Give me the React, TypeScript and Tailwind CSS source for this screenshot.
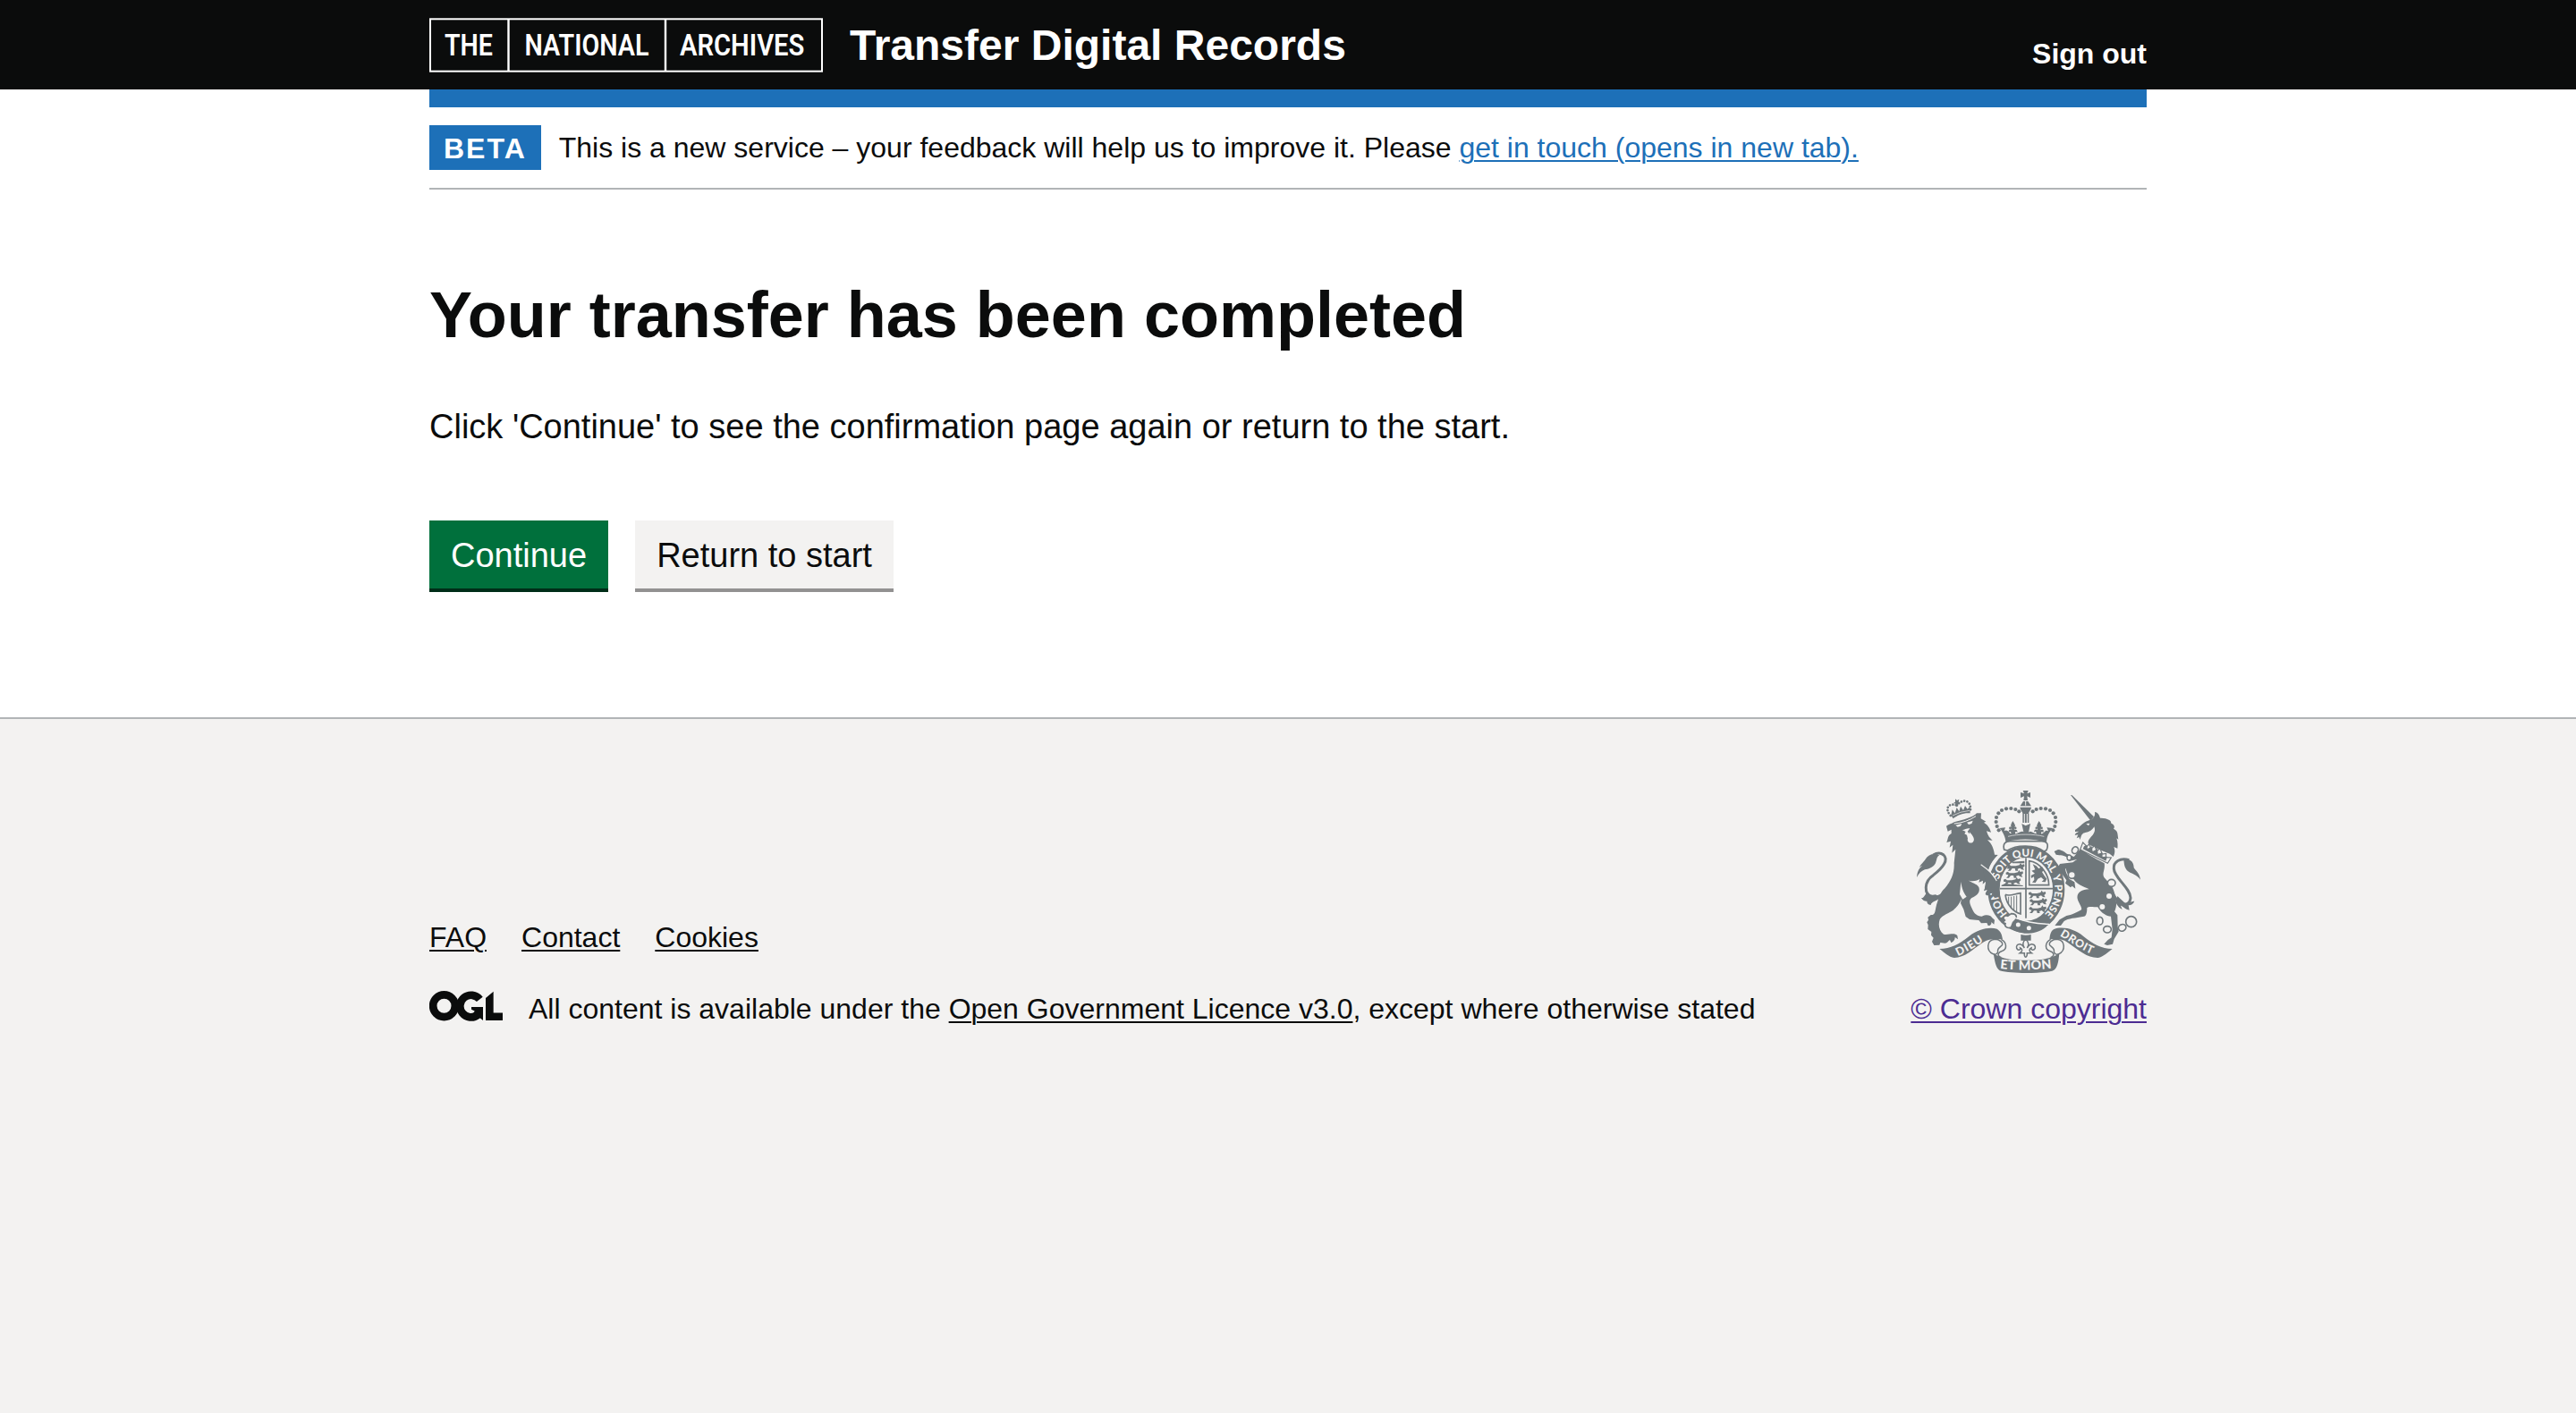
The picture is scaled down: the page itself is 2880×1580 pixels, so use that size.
import React from "react";

const GREY = "#6f777b";
const PAPER = "#f3f2f1";

function ArchivesLogo() {
  return (
    <svg className="block h-[61px] w-[440px]" viewBox="0 0 440 61" fill="none" aria-label="The National Archives">
      <rect x="1" y="1.3" width="438" height="58.4" stroke="#fff" strokeWidth="2" />
      <path d="M88.5 1v59M264 1v59" stroke="#fff" strokeWidth="2.4" />
      <g fill="#fff" fontFamily="Roboto, sans-serif" fontWeight="600" fontSize="34">
        <text transform="translate(17 42.3) scale(0.85 1)" textLength="63.5" lengthAdjust="spacingAndGlyphs">THE</text>
        <text transform="translate(106.5 42.3) scale(0.85 1)" textLength="163.5" lengthAdjust="spacingAndGlyphs">NATIONAL</text>
        <text transform="translate(280 42.3) scale(0.85 1)" textLength="164" lengthAdjust="spacingAndGlyphs">ARCHIVES</text>
      </g>
    </svg>
  );
}

function OglLogo() {
  return (
    <svg className="block h-[33.5px] w-[82px]" viewBox="0 0 246 100" aria-label="OGL">
      <g fill="none" stroke="#0b0c0c" strokeWidth="26">
        <circle cx="49.500" cy="50" r="37" />
        <path d="M169 28 A37 37 0 1 0 163 80" />
      </g>
      <path fill="#0b0c0c" d="M141 54H180V99L168 89C158 97 150 98 140 99L138 78C146 76 150 72 152 67L141 62ZM189 24 215 2V73H246V99H189Z" />
    </svg>
  );
}

function Fleur({ x, y, s }: { x: number; y: number; s: number }) {
  return (
    <g transform={`translate(${x} ${y}) scale(${s})`} fill={GREY}>
      <path d="M0-34C-14-14-12-4-3 8H3C12-4 14-14 0-34ZM-4 4C-10-8-22-6-20 4-18 12-10 10-9 5-8 10-6 12-4 14ZM4 4C10-8 22-6 20 4 18 12 10 10 9 5 8 10 6 12 4 14ZM-10 11H10V22H-10Z" />
    </g>
  );
}

const crownPearls: [number, number][] = [
  [344, 175], [338, 162], [335, 147], [336, 132], [343, 118], [354, 108], [369, 103], [385, 102], [400, 105], [412, 112],
];

function PasserLion({ x, y }: { x: number; y: number }) {
  return (
    <path
      transform={`translate(${x} ${y})`}
      d="M2 4 8 1 14 6H30L42 3 46-4 50 2 58 0 60 6 54 12 58 19 50 18 44 13 36 16 38 22H29L27 14H18L12 22H3L8 17 10 12 2 10Z"
    />
  );
}

function Crest() {
  return (
    <svg className="block h-[204px] w-[250px]" viewBox="69 42 750 612" fill={GREY} aria-label="Royal coat of arms">
      <defs>
        <path id="garter" d="M436 481A96 109 0 0 1 436 263A96 109 0 0 1 436 481" />
        <path id="scrollLeft" d="M207 597 C240 583 278 558 310 537" />
        <path id="scrollRight" d="M548 529 C585 548 620 580 674 597" />
        <path id="scrollMid" d="M348 639 Q434 649 540 636" />
      </defs>

      {/* Lion's crown */}
      <g fill="none" stroke={GREY} strokeWidth="8" strokeDasharray="0.100 10" strokeLinecap="round">
        <path d="M182 126C158 98 182 82 203 92M203 92C222 68 252 72 249 108" />
      </g>
      <path d="M198 70 204 75 211 71 209 80 216 84 207 86 208 94H201L199 86 192 84 198 80ZM184 125 188 106 197 118 203 99 211 112 216 95 225 108 231 93 239 104 247 96 248 118C226 116 206 124 191 136Z" />
      <path d="M189 126 Q215 112 246 109" stroke={PAPER} strokeWidth="2" fill="none" />

      {/* Lion's tail */}
      <path d="M172 372C156 390 142 404 122 399 90 390 94 346 124 326 156 302 177 274 159 258 148 249 134 252 124 258" fill="none" stroke={GREY} strokeWidth="9" />
      <path d="M69 333C71 310 78 302 88 294 83 296 79 298 77 300 86 284 92 282 98 272 108 256 126 251 145 259 134 264 137 276 131 287 121 302 108 304 96 307 84 312 76 320 69 333ZM101 386C90 402 89 403 84 402 90 412 98 414 103 413 103 420 106 424 116 426 118 414 132 416 150 400L132 391C118 394 108 390 101 386Z" />

      {/* Lion */}
      <path d="M168 161C181 153 187 153 194 148 225 140 257 132 270 118L285 118 284 136 301 146 294 149C308 158 314 168 318 182L303 178C307 194 315 203 323 209L306 208C322 221 327 239 330 257L343 258C326 272 315 290 312 304L322 318C334 336 345 366 346 390 338 402 330 404 320 394L323 382C313 388 309 400 299 390L306 374 294 379C300 364 300 357 302 346L290 356 291 344 277 350 280 339C265 348 247 347 239 341 253 352 271 354 277 366 283 382 271 395 253 402 242 410 247 424 254 437 261 455 270 463 287 464 302 457 316 459 321 468L330 476 328 491 319 483C321 491 314 496 308 495L304 486 285 487 277 477C264 477 254 474 246 474L233 465 226 440 216 420 219 405C212 421 202 437 187 446 168 457 151 463 146 475 140 493 144 512 159 524 175 528 195 516 205 529L207 541 197 534C197 545 190 550 184 552L180 543C174 547 172 553 164 554L148 552 145 560 127 561 120 549 125 536 117 527 118 516 106 507 107 493 103 484 108 476 106 467 116 459C130 461 130 448 133 434 140 408 148 382 163 370 183 346 196 320 194 285L199 239 187 251 190 224 179 233 183 212 169 216C175 204 171 194 185 186L185 173 173 179Z" />
      <g fill={PAPER}>
        <path d="M199 158 220 153 216 161 206 164ZM237 149 257 143 253 153 243 156ZM221 174C229 175 235 168 247 169L239 180C245 186 248 192 245 180 258 193 266 207 257 215 247 223 236 212 240 203L237 191 229 187 233 180Z" />
        <path d="M217 348C220 372 226 384 236 398L223 407 213 390Z" />
      </g>
      <path d="M194 153Q233 150 267 128" stroke={PAPER} strokeWidth="3" fill="none" />

      {/* Garter and shield */}
      <path d="M342 257C325 274 314 292 309 308L330 330 362 280Z" fill={PAPER} />
      <ellipse cx="436" cy="373" rx="109" ry="126" fill={PAPER} stroke={GREY} strokeWidth="40" />
      <ellipse cx="436" cy="371" rx="88" ry="101" fill={PAPER} />
      <path d="M435 268V470M347 371H525" stroke={GREY} strokeWidth="5" />
      <g>
        <path d="M388 281 430 278V286H390ZM370 304 379 294 382 302V305ZM352 360 365 354 425 360V363H354Z" />
        <PasserLion x={371} y={289} />
        <PasserLion x={366} y={313} />
        <PasserLion x={358} y={337} />
        <PasserLion x={442} y={381} />
        <PasserLion x={446} y={405} />
        <PasserLion x={444} y={431} />
      </g>
      <g fill="none" stroke={GREY}>
        <path d="M446 278V359H512C512 325 486 284 446 278Z" strokeWidth="5" />
        <path d="M366 391 C383 398 396 388 417 386V456C395 450 370 427 366 391" strokeWidth="5" />
        <path d="M377 398V424M386 398V435M395 396V443M404 394V449" strokeWidth="3" />
      </g>
      <path d="M458 289 470 295 478 304 489 297 496 309 489 315 497 328 505 338 500 349 488 348 495 341 486 333 475 338 467 351 456 350 463 341 462 331 453 336 452 327 465 320 454 311 466 307Z" />
      <g fill={PAPER} fontFamily="Lato, sans-serif" fontWeight="900" fontSize="35">
        <text><textPath href="#garter" startOffset="70">HON</textPath></text>
        <text><textPath href="#garter" startOffset="192">SOIT QUI MAL</textPath></text>
        <text><textPath href="#garter" startOffset="438">Y PENSE</textPath></text>
      </g>

      {/* Garter buckle */}
      <path d="M372 462C414 482 458 492 505 497 480 520 450 522 430 521 402 517 382 506 366 490Z" />
      <path d="M386 455C410 455 405 475 392 484L386 500C372 507 362 497 366 488L357 484 364 477C354 470 362 458 374 463Z" fill={PAPER} stroke={GREY} strokeWidth="5" />
      <circle cx="409" cy="492" r="7.500" fill={PAPER} />
      <circle cx="445" cy="503" r="7.500" fill={PAPER} />
      <path d="M395 468C425 478 460 490 514 490" fill="none" stroke={PAPER} strokeWidth="4" />

      {/* Lion's forepaw over the garter */}
      <path d="M290 300C311 312 328 328 338 354L347 385C343 404 330 403 320 392L323 382 306 393 299 388 306 374 296 376 300 350Z" />
      <path d="M284 290C306 305 326 320 337 345" stroke={PAPER} strokeWidth="3.500" fill="none" />

      {/* Royal crown */}
      <path d="M362 240C356 218 368 212 382 212H488C502 212 514 219 504 242L495 246C466 222 402 223 373 243Z" fill={PAPER} stroke={GREY} strokeWidth="5" />
      <path d="M367 214C367 200 358 180 347 168L366 166 362 178C373 170 378 185 385 187 387 179 379 178 377 183 376 171 384 170 389 176L386 157 391 145 399 158 394 174C402 171 408 174 406 183 403 178 398 179 399 187 408 188 417 175 427 181L421 153 434 160 450 153 444 182C453 174 461 188 470 187 470 178 465 178 462 182 462 171 471 171 475 176L472 158 479 145 487 158 483 176C491 171 497 174 493 183 490 179 485 180 486 187 496 188 499 171 510 178L505 166 525 168C510 184 505 199 504 216 460 202 408 203 367 214Z" />
      <path d="M375 196C410 187 459 187 496 196" fill="none" stroke={PAPER} strokeWidth="2" />
      {crownPearls.map(([x, y]) => (
        <g key={x + "-" + y}>
          <circle cx={x} cy={y} r="6.300" />
          <circle cx={870 - x} cy={y} r="6.300" />
        </g>
      ))}
      <path d="M425 42H443L439 52 450 48V66L439 61 441 75H427L429 61 417 66V48L429 52ZM426 78H442L453 94H416ZM415 98H453C451 110 443 114 445 119V150H424V119C425 114 417 110 415 98Z" />
      <path d="M434 78V92M430 120V150M439 120V150" stroke={PAPER} strokeWidth="3" />

      {/* Unicorn */}
      <path d="M585 57 590 58 663 130 652 143Z" />
      <path d="M655 139C662 132 668 128 666 114 677 116 681 124 684 134 707 133 724 143 720 151 734 158 733 167 729 170 744 178 742 184 745 206L739 202C744 217 743 228 742 236L730 231C735 245 733 253 728 264L716 254C693 244 665 235 646 222 638 212 652 200 660 190 666 181 668 174 664 163 656 178 643 181 632 184 622 186 620 195 617 207L613 198 605 202 610 190 599 192 602 185 613 179 600 180 600 174C612 167 622 155 631 149 639 143 647 143 655 139Z" />
      <path d="M637 153 649 152 645 160Z" fill={PAPER} />
      <path d="M619 236 C650 263 680 275 698 286 702 306 689 319 697 333 709 348 724 358 729 376 736 398 744 424 732 448L742 460 743 498 746 515 731 540 726 557 708 561 697 557 710 543 722 535 725 507 720 464C704 463 686 451 676 433 658 432 643 430 640 436 640 455 636 466 625 465 604 470 576 470 563 480L552 495 532 495 548 475 571 462C588 460 608 449 621 442 624 432 613 423 608 405 604 386 620 373 647 373 627 364 603 355 593 337 578 333 571 316 569 302 564 308 572 322 581 339L598 349 601 371 590 362 585 367 567 353 571 343C558 324 548 311 542 300L549 288 592 283 606 273 580 279 575 268C564 257 550 260 536 257L530 246 543 240C560 242 567 251 576 256L596 264Z" />
      <path d="M626 216 640 230 647 221 654 238 665 227 673 244 684 237 691 255 704 253 703 266 721 267 709 286 617 240Z" fill={PAPER} stroke={GREY} strokeWidth="3.500" />
      <path d="M630 229 639 224 642 237 656 229 659 246 675 237 677 254 691 250 692 264 708 263 703 278 626 238Z" />

      {/* Unicorn's tail */}
      <path d="M781 275C751 266 728 281 730 304 731 335 785 368 786 402 783 426 768 426 752 420 735 409 731 390 714 370" fill="none" stroke={GREY} strokeWidth="9" />
      <path d="M763 275C786 268 797 284 797 301 805 313 816 319 819 341 809 327 798 323 786 318 764 307 765 288 763 275ZM742 396 768 420C777 422 787 412 799 413 795 422 786 428 779 427L782 443C765 439 762 430 753 428L758 441C741 431 741 424 736 417Z" />

      {/* Chain */}
      <g fill={PAPER} stroke={GREY} strokeWidth="5">
        <ellipse cx="600" cy="242" rx="10" ry="12" transform="rotate(30 600 242)" />
        <ellipse cx="722" cy="352" rx="13" ry="12" />
        <ellipse cx="683" cy="479" rx="10" ry="13" />
        <ellipse cx="708" cy="508" rx="13" ry="11" />
        <ellipse cx="758" cy="502" rx="13" ry="11" transform="rotate(-25 758 502)" />
        <circle cx="788" cy="482" r="18" />
        <ellipse cx="589" cy="325" rx="12" ry="12" />
        <ellipse cx="580" cy="267" rx="7" ry="9" strokeWidth="4" />
      </g>
      <g fill={PAPER}>
        <circle cx="714" cy="396" r="9" />
        <circle cx="691" cy="432" r="9" />
      </g>

      {/* Motto scroll */}
      <path d="M145 573C183 571 211 558 245 530 276 506 312 499 338 506 352 515 355 528 357 541L326 541C309 540 298 547 285 556 257 575 229 603 195 603 176 601 162 585 145 573Z" />
      <path d="M725 573C688 571 661 558 627 530 598 506 558 496 529 507 516 514 516 530 514 541L545 541C559 541 571 548 584 558 612 577 641 604 677 603 695 600 710 584 725 573Z" />
      <path d="M326 587C354 609 397 611 434 611 474 611 517 609 547 589 544 616 541 643 523 647 480 656 390 657 347 646 333 635 330 611 326 587Z" />
      <g fill="none" stroke={GREY} strokeWidth="4.500">
        <path d="M330 541C302 545 302 579 324 590 332 594 340 590 341 582M352 541C372 552 372 574 356 580 344 584 334 594 352 602M330 541C346 541 362 552 354 562 348 568 338 572 341 582" />
        <path d="M540 541C568 545 568 579 546 590 538 594 530 590 529 582M518 541C498 552 498 574 514 580 526 584 536 594 518 602M540 541C524 541 508 552 516 562 522 568 532 572 529 582" />
      </g>
      <g fill={PAPER} fontFamily="Lato, sans-serif" fontWeight="900">
        <text fontSize="38" letterSpacing="3"><textPath href="#scrollLeft">DIEU</textPath></text>
        <text fontSize="37" letterSpacing="2"><textPath href="#scrollRight">DROIT</textPath></text>
        <text fontSize="43" letterSpacing="1"><textPath href="#scrollMid">ET MON</textPath></text>
      </g>

      {/* Fleur-de-lis pendant */}
      <path d="M418 525Q435 530 452 525V545H418Z" />
      <path d="M434 540C422 552 424 562 430 570 418 550 400 557 404 571 408 580 418 577 416 570 426 575 422 582 415 587H430C428 605 440 605 439 587H454C447 582 443 575 453 570 451 577 461 580 466 571 468 557 451 550 439 570 446 562 446 552 434 540Z" fill={PAPER} stroke={GREY} strokeWidth="4.500" />
      <Fleur x={391} y={166} s={0.62} />
      <Fleur x={479} y={166} s={0.62} />
    </svg>
  );
}

const footerLink = "underline decoration-2 underline-offset-[3px]";

export default function App() {
  return (
    <div className="flex min-h-[1580px] flex-col bg-white font-['Liberation_Sans',Arial,sans-serif] text-[32px] leading-[40px] text-[#0b0c0c]">
      <header className="h-[100px] bg-[#0b0c0c] text-white">
        <div className="mx-auto flex w-[1920px] items-start">
          <div className="pt-5">
            <ArchivesLogo />
          </div>
          <a className="ml-[30px] mt-[27px] text-[48px] font-bold leading-[48px]">Transfer Digital Records</a>
          <a className="ml-auto mt-10 font-bold">Sign out</a>
        </div>
      </header>

      <div className="mx-auto w-[1920px]">
        <div className="h-5 bg-[#1d70b8]" />
        <div className="flex items-center border-b-2 border-[#b1b4b6] py-5">
          <strong className="mr-5 bg-[#1d70b8] px-4 pb-2 pt-2.5 leading-[32px] tracking-[2px] text-white">BETA</strong>
          <span>
            This is a new service – your feedback will help us to improve it. Please{" "}
            <a className="text-[#1d70b8] underline decoration-2 underline-offset-[3px]">get in touch (opens in new tab).</a>
          </span>
        </div>

        <main className="pb-36 pt-[100px]">
          <h1 className="text-[72px] font-bold leading-[80px]">Your transfer has been completed</h1>
          <p className="mt-[60px] text-[38px] leading-[50px]">
            Click 'Continue' to see the confirmation page again or return to the start.
          </p>
          <div className="mt-20 flex gap-[30px] text-[38px] leading-[38px]">
            <button className="bg-[#00703c] px-6 pb-[18px] pt-5 text-white shadow-[0_4px_0_#002d18]">Continue</button>
            <button className="bg-[#f3f2f1] px-6 pb-[18px] pt-5 shadow-[0_4px_0_#929191]">Return to start</button>
          </div>
        </main>
      </div>

      <footer className="flex-1 border-t-2 border-[#b1b4b6] bg-[#f3f2f1] pt-20">
        <div className="mx-auto flex w-[1920px] items-end justify-between">
          <div>
            <nav className="mb-10 flex gap-[39px]">
              <a className={footerLink}>FAQ</a>
              <a className={footerLink}>Contact</a>
              <a className={footerLink}>Cookies</a>
            </nav>
            <div className="flex items-start">
              <OglLogo />
              <p className="ml-[29px]">
                All content is available under the <a className={footerLink}>Open Government Licence v3.0</a>, except where
                otherwise stated
              </p>
            </div>
          </div>
          <div className="flex flex-col items-center gap-5">
            <Crest />
            <a className="text-[#4c2c92] underline decoration-2 underline-offset-[3px]">© Crown copyright</a>
          </div>
        </div>
      </footer>
    </div>
  );
}
